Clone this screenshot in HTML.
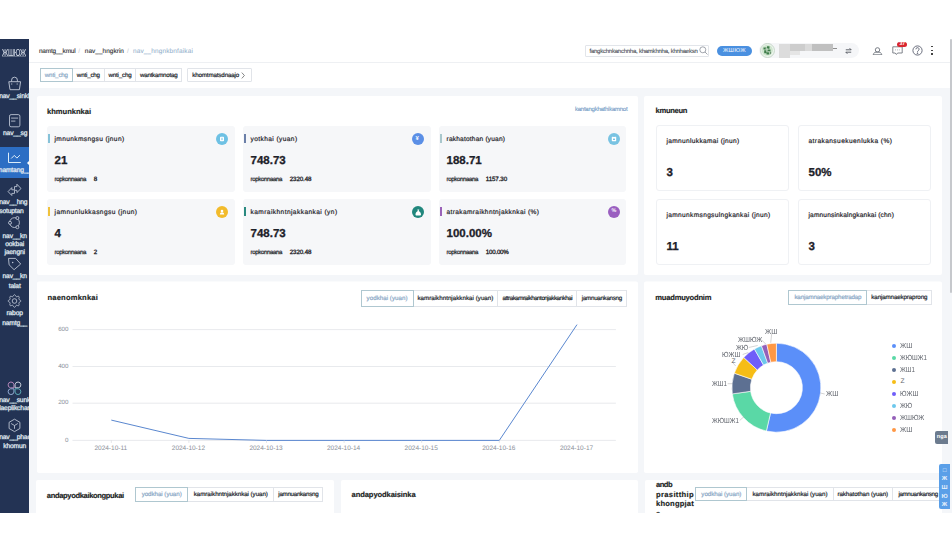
<!DOCTYPE html>
<html><head><meta charset="utf-8">
<style>
*{box-sizing:border-box;margin:0;padding:0}
html,body{width:952px;height:552px;overflow:hidden;background:#fff}
body{position:relative;font-family:"Liberation Sans",sans-serif;color:#303133;text-rendering:geometricPrecision}
.a{position:absolute}
.t{position:absolute;white-space:nowrap;line-height:1}
#app{position:absolute;left:0;top:39px;width:952px;height:473.5px;overflow:hidden;background:#fff}
#side{position:absolute;left:0;top:0;width:29.3px;height:473.5px;background:#233354;overflow:hidden}
.sl{position:absolute;left:0;width:29.3px;text-align:center;color:#dfe4ec;font-size:6.7px;line-height:1;white-space:nowrap;letter-spacing:-0.15px;-webkit-text-stroke:0.3px #dfe4ec}
.panel{position:absolute;background:#fff;border-radius:2px}
.ptitle{position:absolute;font-size:7.6px;font-weight:bold;color:#1a1d22;white-space:nowrap;line-height:1;-webkit-text-stroke:0.15px #1a1d22}
.sc{position:absolute;background:#f6f7f9;border-radius:3px}
.sc .bar{position:absolute;left:1.5px;top:8.2px;width:1.5px;height:9px}
.sc .tt{position:absolute;left:8px;top:11.2px;font-size:6.6px;color:#1f2329;white-space:nowrap;line-height:1;-webkit-text-stroke:0.2px #1f2329}
.sc .num{position:absolute;left:8px;top:30px;font-size:11.5px;font-weight:bold;color:#1d2129;line-height:1;white-space:nowrap;-webkit-text-stroke:0.3px #1d2129}
.sc .prev{position:absolute;left:8px;top:51.4px;font-size:6.1px;color:#2a2d33;white-space:nowrap;line-height:1;-webkit-text-stroke:0.25px #2a2d33}
.sc .prev b{position:absolute;left:40.5px;top:0;font-weight:bold}
.sc .ic{position:absolute;width:12px;height:12px;border-radius:6px;top:7px}
.oc{position:absolute;background:#fff;border:0.8px solid #eff1f4;border-radius:3px}
.oc .tt{position:absolute;left:9.5px;top:12.6px;font-size:6.6px;color:#1f2329;white-space:nowrap;line-height:1;-webkit-text-stroke:0.2px #1f2329}
.oc .num{position:absolute;left:9.5px;top:41.8px;font-size:11.5px;font-weight:bold;color:#1d2129;line-height:1;-webkit-text-stroke:0.3px #1d2129}
.tabs{position:absolute;display:flex;height:14.5px;border:0.7px solid #e1e4e9;background:#fff}
.tabs div{height:100%;border-left:0.7px solid #e1e4e9;font-size:6.2px;color:#22262c;-webkit-text-stroke:0.2px currentColor;display:flex;align-items:center;justify-content:center;white-space:nowrap}
.tabs div:first-child{border-left:none}
.tabs div.on{outline:0.8px solid #afc7d0;color:#8aa8c6 !important;position:relative;z-index:1}
</style></head>
<body>
<div id="app">
  <!-- sidebar -->
  <div id="side">
    <div class="t" style="left:2.2px;top:10px;font-size:10px;color:#d6dce6;-webkit-text-stroke:0.1px #d6dce6;transform:scaleX(0.66);transform-origin:0 0;letter-spacing:-0.3px">ЖШЮЖ</div><div class="a" style="left:2.2px;top:16.9px;width:23.5px;height:0.5px;background:#5d6a82"></div>
    <!-- bag -->
    <svg class="a" style="left:4px;top:35px" width="20" height="18" viewBox="0 0 20 18" fill="none" stroke="#c3cbd9" stroke-width="0.9" stroke-linejoin="round">
      <path d="M4.8 7.7h11.8l-1.2 8h-9.4z"/><path d="M7.6 7.6v-1.5a2.9 2.9 0 0 1 5.8 0v1.5"/><path d="M7.7 9.4v1.2M13.2 9.4v1.2" stroke-width="1.1"/>
    </svg>
    <div class="sl" style="top:55.1px;text-align:left;left:-0.8px">nav__sinkh</div>
    <!-- doc -->
    <svg class="a" style="left:4px;top:71px" width="20" height="20" viewBox="0 0 20 20" fill="none" stroke="#c3cbd9" stroke-width="0.85">
      <rect x="5.5" y="4.6" width="10.4" height="12.2" rx="1.6"/><path d="M7.1 8.1h7M7.1 11.1h4.3"/>
    </svg>
    <div class="sl" style="top:91.6px;left:0.5px">nav__sg</div>
    <!-- active -->
    <div class="a" style="left:0;top:107.5px;width:29.3px;height:31.5px;background:#2c6ec4"></div>
    <svg class="a" style="left:4px;top:109px" width="20" height="20" viewBox="0 0 20 20" fill="none" stroke="#e4f2fc" stroke-width="0.95" stroke-linejoin="round">
      <path d="M4.5 4.7v9.8h12.3"/><path d="M7.2 10.5l3.1-3.1 2.6 2.7 3-3"/>
    </svg>
    <div class="sl" style="top:129.4px;color:#eef4fb;text-align:left;left:-1.2px">namtang__kh</div>
    <div class="a" style="left:26.5px;top:121.6px;width:0;height:0;border-top:2.8px solid transparent;border-bottom:2.8px solid transparent;border-right:2.8px solid #fff"></div>
    <!-- arrows -->
    <svg class="a" style="left:4px;top:141px" width="20" height="18" viewBox="0 0 20 18" fill="none" stroke="#c3cbd9" stroke-width="0.85" stroke-linejoin="round">
      <path d="M4.1 11.6L7.8 7.6V9.8H10.5V6.6H12.9V4.2L17 8.5L12.9 12.6V10.3H10.5V13.4H7.8V15.5Z"/>
    </svg>
    <div class="sl" style="top:161.2px;text-align:left;left:-0.8px">nav__hng</div>
    <div class="sl" style="top:169.8px;text-align:left;left:-0.8px">sotuptan</div>
    <!-- nodes -->
    <svg class="a" style="left:4px;top:174px" width="20" height="20" viewBox="0 0 20 20" fill="none" stroke="#c3cbd9" stroke-width="0.85">
      <circle cx="10.5" cy="9.6" r="4.9"/><circle cx="6" cy="9.8" r="1.5" fill="#233354"/><circle cx="13.4" cy="5" r="1.5" fill="#233354"/><circle cx="13.4" cy="14.2" r="1.5" fill="#233354"/>
    </svg>
    <div class="sl" style="top:194.5px">nav__kn</div>
    <div class="sl" style="top:202.8px">ookbai</div>
    <div class="sl" style="top:211.2px">jaengni</div>
    <!-- tag -->
    <svg class="a" style="left:4px;top:216px" width="20" height="20" viewBox="0 0 20 20" fill="none" stroke="#c3cbd9" stroke-width="0.85" stroke-linejoin="round">
      <path d="M4.5 3.4H11.6L16.7 9L10.1 14.7L5.1 9.8Z"/><circle cx="8.7" cy="7.4" r="0.75" fill="#c3cbd9" stroke="none"/>
    </svg>
    <div class="sl" style="top:235.3px">nav__kn</div>
    <div class="sl" style="top:244.7px">talat</div>
    <!-- gear -->
    <svg class="a" style="left:4px;top:252.2px" width="20" height="20" viewBox="0 0 20 20" fill="none" stroke="#c3cbd9" stroke-width="0.85">
      <path d="M10.50 3.70 L10.91 3.82 L11.27 4.15 L11.57 4.61 L11.82 5.07 L12.05 5.45 L12.30 5.66 L12.63 5.69 L13.05 5.58 L13.56 5.43 L14.09 5.32 L14.58 5.34 L14.95 5.55 L15.16 5.92 L15.18 6.41 L15.07 6.94 L14.92 7.45 L14.81 7.87 L14.84 8.20 L15.05 8.45 L15.43 8.68 L15.89 8.93 L16.35 9.23 L16.68 9.59 L16.80 10.00 L16.68 10.41 L16.35 10.77 L15.89 11.07 L15.43 11.32 L15.05 11.55 L14.84 11.80 L14.81 12.13 L14.92 12.55 L15.07 13.06 L15.18 13.59 L15.16 14.08 L14.95 14.45 L14.58 14.66 L14.09 14.68 L13.56 14.57 L13.05 14.42 L12.63 14.31 L12.30 14.34 L12.05 14.55 L11.82 14.93 L11.57 15.39 L11.27 15.85 L10.91 16.18 L10.50 16.30 L10.09 16.18 L9.73 15.85 L9.43 15.39 L9.18 14.93 L8.95 14.55 L8.70 14.34 L8.37 14.31 L7.95 14.42 L7.44 14.57 L6.91 14.68 L6.42 14.66 L6.05 14.45 L5.84 14.08 L5.82 13.59 L5.93 13.06 L6.08 12.55 L6.19 12.13 L6.16 11.80 L5.95 11.55 L5.57 11.32 L5.11 11.07 L4.65 10.77 L4.32 10.41 L4.20 10.00 L4.32 9.59 L4.65 9.23 L5.11 8.93 L5.57 8.68 L5.95 8.45 L6.16 8.20 L6.19 7.87 L6.08 7.45 L5.93 6.94 L5.82 6.41 L5.84 5.92 L6.05 5.55 L6.42 5.34 L6.91 5.32 L7.44 5.43 L7.95 5.58 L8.37 5.69 L8.70 5.66 L8.95 5.45 L9.18 5.07 L9.43 4.61 L9.73 4.15 L10.09 3.82 L10.50 3.70Z"/><circle cx="10.5" cy="10" r="2.3"/>
    </svg>
    <div class="sl" style="top:272.2px">rabop</div>
    <div class="sl" style="top:281.6px">namtg__</div>
    <!-- colorful -->
    <svg class="a" style="left:4px;top:339px" width="20" height="20" viewBox="0 0 20 20" fill="none" stroke-width="0.9">
      <path d="M10.2 9.6H6.9A2.9 2.9 0 1 1 10.2 6.3Z" stroke="#c48fc4" transform="translate(-0.3 0.2)"/><path d="M10.8 9.6H14.1A2.9 2.9 0 1 0 10.8 6.3Z" stroke="#d9dee8" transform="translate(0.3 0.2)"/><path d="M10.2 10.6H6.9A2.9 2.9 0 1 0 10.2 13.9Z" stroke="#9bb3dc" transform="translate(-0.3 0.2)"/><path d="M10.8 10.6H14.1A2.9 2.9 0 1 1 10.8 13.9Z" stroke="#5fb3bd" transform="translate(0.3 0.2)"/>
    </svg>
    <div class="sl" style="top:358.8px;text-align:left;left:-0.8px">nav__sunk</div>
    <div class="sl" style="top:367px;text-align:left;left:-0.8px">laeplikchan</div>
    <!-- cube -->
    <svg class="a" style="left:4px;top:376px" width="20" height="20" viewBox="0 0 20 20" fill="none" stroke="#c3cbd9" stroke-width="0.85" stroke-linejoin="round">
      <path d="M10.5 4.2L15.9 7.3V13.5L10.5 16.6L5.1 13.5V7.3Z"/><path d="M7.1 8.5L10.5 10.5L13.8 8.5M10.5 10.5V13.8"/>
    </svg>
    <div class="sl" style="top:396.3px;text-align:left;left:-0.8px">nav__phaen</div>
    <div class="sl" style="top:405.3px">khomun</div>
  </div>
  <!-- header -->
  <div class="a" style="left:29.3px;top:23px;width:921px;height:0.8px;background:#eef0f3"></div>
  <div class="t" style="left:39px;top:10px;font-size:6.4px;color:#303133;-webkit-text-stroke:0.12px currentColor;--w:36.4px;letter-spacing:-0.180px;/*a*/">namtg__kmul</div>
  <div class="t" style="left:78.3px;top:10px;font-size:6.4px;color:#c0c4cc">/</div>
  <div class="t" style="left:84.8px;top:10px;font-size:6.4px;color:#303133;-webkit-text-stroke:0.12px currentColor;--w:39.2px;letter-spacing:0.069px;/*a*/">nav__hngkrin</div>
  <div class="t" style="left:127px;top:10px;font-size:6.4px;color:#c0c4cc">/</div>
  <div class="t" style="left:133px;top:10px;font-size:6.4px;color:#92afcc;-webkit-text-stroke:0.05px currentColor;--w:60px;letter-spacing:0.174px;/*a*/">nav__hngnkbnfaikai</div>
  <!-- search -->
  <div class="a" style="left:584.6px;top:6px;width:124.6px;height:11.5px;border:0.7px solid #e2e5ea;border-radius:1px;background:#fff"></div>
  <div class="t" style="left:589.5px;top:9.8px;font-size:6px;color:#4a4e55;-webkit-text-stroke:0.1px #4a4e55;--w:108px;letter-spacing:-0.239px;/*a*/">fangkchnkanchnha, khamkhnha, khnhaeksn</div>
  <svg class="a" style="left:698.5px;top:7px" width="9" height="9" viewBox="0 0 9 9" fill="none" stroke="#8a8f99" stroke-width="0.8"><circle cx="3.8" cy="3.8" r="3"/><path d="M6 6l2.5 2.5"/></svg>
  <!-- guide button -->
  <div class="a" style="left:717px;top:6.8px;width:35px;height:10.1px;border-radius:5px;background:#4a90e0"></div>
  <div class="t" style="left:722.9px;top:10.2px;font-size:5.8px;color:#f2f7fd;--w:23px;letter-spacing:0.312px;/*a*/">ЖШЮЖ</div>
  <!-- user pill -->
  <div class="a" style="left:759px;top:4.3px;width:100px;height:14.7px;border-radius:7.4px;background:#f5f6f8"></div>
  <div class="a" style="left:759.5px;top:3.7px;width:15px;height:15px;border-radius:50%;background:#eef6ee;border:0.7px solid #c9d8cb"></div>
  <svg class="a" style="left:761px;top:5px" width="12.5" height="12.5" viewBox="0 0 12.5 12.5"><circle cx="6.25" cy="6.25" r="5.6" fill="#cfe5cf"/><path d="M2.5 3.5h3v2h-3zM6 2.2h2.5v2.5H6zM3.2 6.2h2.2v3H3.2zM6.5 5.5h3v2.2h-3zM5.5 8.2h2.8v2.2H5.5z" fill="#3f7d4a"/><path d="M8.8 8l1.4 0.8-0.6 1.5z" fill="#2d5f37"/><path d="M4.4 4.8h2.4M7.2 7.6h1.6" stroke="#e8f3e8" stroke-width="0.6"/></svg>
  <div class="a" style="left:779.4px;top:5px;width:58px;height:14px;filter:blur(0.7px)"><div class="a" style="left:0;top:0;width:11px;height:14px;background:#dcdcdc"></div><div class="a" style="left:11px;top:0;width:15px;height:7px;background:#cdcdcd"></div><div class="a" style="left:26px;top:0;width:7px;height:7px;background:#dadada"></div><div class="a" style="left:33px;top:0;width:21px;height:7px;background:#c0c0c0"></div><div class="a" style="left:11px;top:7px;width:10px;height:4px;background:#e5e5e5"></div><div class="a" style="left:53.5px;top:3.6px;width:4.5px;height:0.9px;background:#8f8f8f"></div></div>
  <svg class="a" style="left:844.5px;top:7.5px" width="7" height="8" viewBox="0 0 7 8" fill="none" stroke="#3a3f48" stroke-width="0.8"><path d="M0.8 2.8h5.4L4.6 1.2M6.2 5.2H0.8l1.6 1.6"/></svg>
  <!-- icons -->
  <svg class="a" style="left:871.5px;top:7.5px" width="11" height="8.5" viewBox="0 0 11 8.5" fill="none" stroke="#6a6f78" stroke-width="0.9"><circle cx="5.5" cy="2.9" r="2.2"/><path d="M1.2 7.8c0.3-2 1.9-2.8 4.3-2.8s4 0.8 4.3 2.8z"/></svg>
  <svg class="a" style="left:891.5px;top:7.3px" width="11" height="9.5" viewBox="0 0 11 9.5" fill="none" stroke="#6a6f78" stroke-width="0.85"><path d="M0.8 0.8h9.4v6.2h-4.6l-1.2 1.5-1.2-1.5h-2.4z"/><path d="M3.3 3.9h0.7M5.1 3.9h0.7M6.9 3.9h0.7" stroke-width="0.7"/></svg>
  <div class="a" style="left:897.2px;top:3.3px;width:10px;height:5.2px;border-radius:2.6px;background:#d9262f"></div>
  <div class="t" style="left:899.5px;top:3.3px;font-size:5px;color:#fff;font-weight:bold">37</div>
  <svg class="a" style="left:911.5px;top:6.3px" width="11" height="11" viewBox="0 0 11 11" fill="none" stroke="#5b6070" stroke-width="0.9"><circle cx="5.5" cy="5.5" r="4.6"/><path d="M3.9 4.3a1.6 1.6 0 1 1 2.3 1.4c-0.5 0.3-0.7 0.6-0.7 1.2"/><circle cx="5.5" cy="8.2" r="0.4" fill="#5b6070"/></svg>
  <div class="a" style="left:931px;top:6.8px;width:1.6px;height:1.6px;background:#444"></div>
  <div class="a" style="left:931px;top:10.6px;width:1.6px;height:1.6px;background:#444"></div>
  <div class="a" style="left:931px;top:14.4px;width:1.6px;height:1.6px;background:#444"></div>
  <!-- date tabs -->
  <div class="tabs" style="left:39.5px;top:29.2px;width:142.5px;height:14.3px">
    <div class="on" style="width:31.8px;color:#8aaed0"><span style="--w:23px;letter-spacing:-0.178px;/*a*/">wnti_chg</span></div><div style="width:31.5px"><span style="--w:23px;letter-spacing:-0.178px;/*a*/">wnti_chg</span></div><div style="width:32px"><span style="--w:23px;letter-spacing:-0.178px;/*a*/">wnti_chg</span></div><div style="width:45.8px"><span style="--w:37.4px;letter-spacing:-0.238px;/*a*/">wantkamnotag</span></div>
  </div>
  <div class="tabs" style="left:186.5px;top:29.2px;width:65.5px;height:14.3px;border-radius:1px">
    <div style="width:100%;justify-content:flex-start;padding-left:4.7px"><span style="--w:47px;letter-spacing:-0.123px;/*a*/">khomtmatsdnaajo</span></div>
  </div>
  <svg class="a" style="left:240.5px;top:32.7px" width="4" height="7" viewBox="0 0 4 7" fill="none" stroke="#555" stroke-width="0.7"><path d="M0.8 0.6l2.6 2.9-2.6 2.9"/></svg>
  <!-- gray content bg -->
  <div class="a" style="left:29.3px;top:49px;width:921px;height:425px;background:#f4f6f9"></div>
  <!-- right scroll strip -->
  <div class="a" style="left:949.8px;top:49px;width:2.2px;height:425px;background:#f4f6f9"></div><div class="a" style="left:950.2px;top:0.4px;width:1.8px;height:253.6px;border-radius:1px;background:#c6c8cc"></div>

  <!-- panels -->
  <div class="panel" style="left:36.5px;top:57px;width:601.5px;height:178.7px">
    <div class="ptitle" style="left:10.5px;top:11.6px;--w:44px;letter-spacing:-0.031px;/*a*/">khmunknkai</div>
    <div class="t" style="left:538.5px;top:10.6px;font-size:6px;color:#6f98c4;-webkit-text-stroke:0.1px #6f98c4;--w:52.4px;letter-spacing:-0.245px;/*a*/">kantangkhathikamnot</div>
  </div>
  <div class="panel" style="left:644.3px;top:56.5px;width:297.7px;height:179.2px">
    <div class="ptitle" style="left:11.3px;top:11.6px;--w:31.4px;letter-spacing:-0.338px;/*a*/">kmuneun</div>
  </div>
  <div class="sc" style="left:46.5px;top:86.8px;width:188px;height:65.8px">
    <div class="bar" style="background:#86c2d8"></div>
    <div class="tt" style="--w:70px;letter-spacing:0.366px;/*a*/">jmnunkmsngsu (jnun)</div>
    <div class="num" style="">21</div>
    <div class="prev" style="--w:31.6px;letter-spacing:-0.362px;/*a*/">ropkonnaana</div>
    <div class="t" style="left:47.3px;top:51.4px;font-size:6.2px;color:#1f2329;-webkit-text-stroke:0.3px #1f2329;--w:3px;letter-spacing:-0.453px;/*a*/">8</div>
    <div class="ic" style="left:169.5px;background:#6ec1e4"><svg class="a" style="left:3px;top:3px" width="6" height="6" viewBox="0 0 6 6"><rect x="1" y="0.8" width="4" height="4.4" rx="0.8" fill="#fff"/><path d="M2 2.3h2M2 3.6h2" stroke="#6ec1e4" stroke-width="0.6"/></svg></div>
  </div>
  <div class="sc" style="left:242.5px;top:86.8px;width:188px;height:65.8px">
    <div class="bar" style="background:#6b7fa8"></div>
    <div class="tt" style="--w:47px;letter-spacing:0.398px;/*a*/">yotkhai (yuan)</div>
    <div class="num" style="">748.73</div>
    <div class="prev" style="--w:31.6px;letter-spacing:-0.362px;/*a*/">ropkonnaana</div>
    <div class="t" style="left:47.3px;top:51.4px;font-size:6.2px;color:#1f2329;-webkit-text-stroke:0.3px #1f2329;--w:21.5px;letter-spacing:-0.125px;/*a*/">2320.48</div>
    <div class="ic" style="left:169.5px;background:#5b8fe6"><div class="t" style="left:3.6px;top:3.2px;font-size:6px;color:#fff;font-weight:bold">&#165;</div></div>
  </div>
  <div class="sc" style="left:438.5px;top:86.8px;width:187.5px;height:65.8px">
    <div class="bar" style="background:#a9c7cc"></div>
    <div class="tt" style="--w:58.7px;letter-spacing:0.186px;/*a*/">rakhatothan (yuan)</div>
    <div class="num" style="">188.71</div>
    <div class="prev" style="--w:31.6px;letter-spacing:-0.362px;/*a*/">ropkonnaana</div>
    <div class="t" style="left:47.3px;top:51.4px;font-size:6.2px;color:#1f2329;-webkit-text-stroke:0.3px #1f2329;--w:21.2px;letter-spacing:-0.101px;/*a*/">1157.30</div>
    <div class="ic" style="left:169.5px;background:#79c3e2"><svg class="a" style="left:3px;top:3px" width="6" height="6" viewBox="0 0 6 6"><rect x="0.8" y="1" width="4.4" height="4.2" rx="0.6" fill="#fff"/><path d="M1.8 0.5v1.2M4.2 0.5v1.2" stroke="#fff" stroke-width="0.6"/><rect x="2" y="2.6" width="2" height="1.4" fill="#79c3e2"/></svg></div>
  </div>
  <div class="sc" style="left:46.5px;top:160px;width:188px;height:65.8px">
    <div class="bar" style="background:#f0c23c"></div>
    <div class="tt" style="--w:83px;letter-spacing:0.421px;/*a*/">jamnunlukkasngsu (jnun)</div>
    <div class="num" style="">4</div>
    <div class="prev" style="--w:31.6px;letter-spacing:-0.362px;/*a*/">ropkonnaana</div>
    <div class="t" style="left:47.3px;top:51.4px;font-size:6.2px;color:#1f2329;-webkit-text-stroke:0.3px #1f2329;--w:3px;letter-spacing:-0.453px;/*a*/">2</div>
    <div class="ic" style="left:169.5px;background:#f2bb2c"><svg class="a" style="left:3px;top:2.8px" width="6" height="6.5" viewBox="0 0 6 6.5"><circle cx="3" cy="2" r="1.3" fill="#fff"/><path d="M0.8 5.6c0.2-1.6 1.1-2.3 2.2-2.3s2 0.7 2.2 2.3z" fill="#fff"/></svg></div>
  </div>
  <div class="sc" style="left:242.5px;top:160px;width:188px;height:65.8px">
    <div class="bar" style="background:#2a8a80"></div>
    <div class="tt" style="--w:87px;letter-spacing:0.416px;/*a*/">kamraikhntnjakkankai (yn)</div>
    <div class="num" style="">748.73</div>
    <div class="prev" style="--w:31.6px;letter-spacing:-0.362px;/*a*/">ropkonnaana</div>
    <div class="t" style="left:47.3px;top:51.4px;font-size:6.2px;color:#1f2329;-webkit-text-stroke:0.3px #1f2329;--w:21.5px;letter-spacing:-0.125px;/*a*/">2320.48</div>
    <div class="ic" style="left:169.5px;background:#21877d"><svg class="a" style="left:2.8px;top:2.6px" width="6.5" height="7" viewBox="0 0 6.5 7"><path d="M2.3 0.6h2l-0.6 1.4c1.6 0.6 2.3 2.3 2.3 3.4 0 0.8-0.4 1.1-1.2 1.1h-3.1c-0.8 0-1.2-0.3-1.2-1.1 0-1.1 0.7-2.8 2.3-3.4z" fill="#fff"/></svg></div>
  </div>
  <div class="sc" style="left:438.5px;top:160px;width:187.5px;height:65.8px">
    <div class="bar" style="background:#9a62b8"></div>
    <div class="tt" style="--w:92.8px;letter-spacing:0.356px;/*a*/">atrakamraikhntnjakknkai (%)</div>
    <div class="num" style="">100.00%</div>
    <div class="prev" style="--w:31.6px;letter-spacing:-0.362px;/*a*/">ropkonnaana</div>
    <div class="t" style="left:47.3px;top:51.4px;font-size:6.2px;color:#1f2329;-webkit-text-stroke:0.3px #1f2329;--w:22.8px;letter-spacing:-0.234px;/*a*/">100.00%</div>
    <div class="ic" style="left:169.5px;background:#9a5fc0"><div class="t" style="left:3.4px;top:3.3px;font-size:5.4px;color:#fff;font-weight:bold">%</div></div>
  </div>
  <div class="oc" style="left:656px;top:86.3px;width:133px;height:65.3px">
    <div class="tt" style="--w:73px;letter-spacing:0.317px;/*a*/">jamnunlukkamai (jnun)</div>
    <div class="num">3</div>
  </div>
  <div class="oc" style="left:798px;top:86.3px;width:133px;height:65.3px">
    <div class="tt" style="--w:83.8px;letter-spacing:0.408px;/*a*/">atrakansuekuenlukka (%)</div>
    <div class="num">50%</div>
  </div>
  <div class="oc" style="left:656px;top:160.3px;width:133px;height:65.3px">
    <div class="tt" style="--w:104px;letter-spacing:0.325px;/*a*/">jamnunkmsngsulngkankai (jnun)</div>
    <div class="num">11</div>
  </div>
  <div class="oc" style="left:798px;top:160.3px;width:133px;height:65.3px">
    <div class="tt" style="--w:85.5px;letter-spacing:0.145px;/*a*/">jamnunsinkalngkankai (chn)</div>
    <div class="num">3</div>
  </div>

  <div class="panel" style="left:36.5px;top:243px;width:601.5px;height:190.5px;box-shadow:0 -0.6px 0 #fff">
    <svg class="a" style="left:0;top:0" width="601.5" height="190.5" viewBox="0 0 601.5 190.5"><path d="M35.5 47.6H578.9" stroke="#e2e5e9" stroke-width="0.8"/><path d="M35.5 84.5H578.9" stroke="#e2e5e9" stroke-width="0.8"/><path d="M35.5 121.2H578.9" stroke="#e2e5e9" stroke-width="0.8"/><path d="M35.5 158.4H578.9" stroke="#e2e5e9" stroke-width="0.8"/><path d="M74.3 138.1 L151.9 156.4 L229.5 158.4 L307.1 158.4 L384.7 158.4 L462.3 158.4 L540.0 42.6" fill="none" stroke="#5a87cf" stroke-width="1"/><path d="M74.3 158.4v2.5" stroke="#d0d3d8" stroke-width="0.6"/><path d="M151.9 158.4v2.5" stroke="#d0d3d8" stroke-width="0.6"/><path d="M229.5 158.4v2.5" stroke="#d0d3d8" stroke-width="0.6"/><path d="M307.1 158.4v2.5" stroke="#d0d3d8" stroke-width="0.6"/><path d="M384.7 158.4v2.5" stroke="#d0d3d8" stroke-width="0.6"/><path d="M462.3 158.4v2.5" stroke="#d0d3d8" stroke-width="0.6"/><path d="M540.0 158.4v2.5" stroke="#d0d3d8" stroke-width="0.6"/></svg>
    <div class="ptitle" style="left:11px;top:11.8px;--w:50.5px;letter-spacing:0.178px;/*a*/">naenomknkai</div>
    <div class="t" style="right:569.5px;top:44.7px;font-size:6.2px;color:#8a8f99">600</div>
    <div class="t" style="right:569.5px;top:81.6px;font-size:6.2px;color:#8a8f99">400</div>
    <div class="t" style="right:569.5px;top:118.3px;font-size:6.2px;color:#8a8f99">200</div>
    <div class="t" style="right:569.5px;top:155.5px;font-size:6.2px;color:#8a8f99">0</div>
    <div class="t" style="left:54.3px;top:163.7px;width:40px;text-align:center;font-size:6.5px;color:#8a8f99">2024-10-11</div>
    <div class="t" style="left:131.9px;top:163.7px;width:40px;text-align:center;font-size:6.5px;color:#8a8f99">2024-10-12</div>
    <div class="t" style="left:209.5px;top:163.7px;width:40px;text-align:center;font-size:6.5px;color:#8a8f99">2024-10-13</div>
    <div class="t" style="left:287.1px;top:163.7px;width:40px;text-align:center;font-size:6.5px;color:#8a8f99">2024-10-14</div>
    <div class="t" style="left:364.7px;top:163.7px;width:40px;text-align:center;font-size:6.5px;color:#8a8f99">2024-10-15</div>
    <div class="t" style="left:442.3px;top:163.7px;width:40px;text-align:center;font-size:6.5px;color:#8a8f99">2024-10-16</div>
    <div class="t" style="left:520.0px;top:163.7px;width:40px;text-align:center;font-size:6.5px;color:#8a8f99">2024-10-17</div>
    <div class="tabs" style="left:324.2px;top:8.2px;width:266.7px;height:16.8px">
      <div class="on" style="width:51.2px;color:#7ea6c8"><span style="--w:41px;letter-spacing:0.029px;/*a*/">yodkhai (yuan)</span></div><div style="width:85.4px"><span style="--w:76px;letter-spacing:0.026px;/*a*/">kamraikhntnjakknkai (yuan)</span></div><div style="width:79.7px"><span style="--w:69.6px;letter-spacing:-0.450px;/*a*/">attrakamraikhantonjakkankhai</span></div><div style="width:50.4px"><span style="--w:40px;letter-spacing:-0.284px;/*a*/">jamnuankansng</span></div>
    </div>
  </div>
  <div class="panel" style="left:644.3px;top:243px;width:297.7px;height:190.5px;box-shadow:0 -0.6px 0 #fff">
    <svg class="a" style="left:0;top:0" width="297.7" height="190.5" viewBox="0 0 297.7 190.5"><path d="M132.40 61.20A44.5 44.5 0 1 1 122.39 149.06L126.55 131.03A26.0 26.0 0 1 0 132.40 79.70Z" fill="#5b8ff9" stroke="#fff" stroke-width="0.6"/><path d="M122.39 149.06A44.5 44.5 0 0 1 88.33 111.89L106.65 109.32A26.0 26.0 0 0 0 126.55 131.03Z" fill="#5ad8a6" stroke="#fff" stroke-width="0.6"/><path d="M88.33 111.89A44.5 44.5 0 0 1 90.32 91.21L107.82 97.24A26.0 26.0 0 0 0 106.65 109.32Z" fill="#5d7092" stroke="#fff" stroke-width="0.6"/><path d="M90.32 91.21A44.5 44.5 0 0 1 99.75 75.46L113.32 88.03A26.0 26.0 0 0 0 107.82 97.24Z" fill="#f6bd16" stroke="#fff" stroke-width="0.6"/><path d="M99.75 75.46A44.5 44.5 0 0 1 110.42 67.01L119.56 83.09A26.0 26.0 0 0 0 113.32 88.03Z" fill="#6f5ef9" stroke="#fff" stroke-width="0.6"/><path d="M110.42 67.01A44.5 44.5 0 0 1 117.47 63.78L123.68 81.21A26.0 26.0 0 0 0 119.56 83.09Z" fill="#6dc8ec" stroke="#fff" stroke-width="0.6"/><path d="M117.47 63.78A44.5 44.5 0 0 1 122.84 62.24L126.82 80.31A26.0 26.0 0 0 0 123.68 81.21Z" fill="#945fb9" stroke="#fff" stroke-width="0.6"/><path d="M122.84 62.24A44.5 44.5 0 0 1 132.40 61.20L132.40 79.70A26.0 26.0 0 0 0 126.82 80.31Z" fill="#ff9845" stroke="#fff" stroke-width="0.6"/><path d="M176.2 111.0L180.7 112.0" stroke="#aaa" stroke-width="0.5" fill="none"/><path d="M100.7 134.0L95.7 138.5" stroke="#aaa" stroke-width="0.5" fill="none"/><path d="M88.0 101.7L83.7 101.7" stroke="#aaa" stroke-width="0.5" fill="none"/><path d="M91.7 84.0L88.2 80.0" stroke="#aaa" stroke-width="0.5" fill="none"/><path d="M104.2 70.5L98.7 72.5" stroke="#aaa" stroke-width="0.5" fill="none"/><path d="M113.7 63.5L104.7 65.5" stroke="#aaa" stroke-width="0.5" fill="none"/><path d="M121.7 62.0L117.7 58.0" stroke="#aaa" stroke-width="0.5" fill="none"/><path d="M126.7 60.8L127.7 52.0" stroke="#aaa" stroke-width="0.5" fill="none"/></svg>
    <div class="ptitle" style="left:11px;top:11.8px;--w:56px;letter-spacing:-0.221px;/*a*/">muadmuyodnim</div>
    <div class="tabs" style="left:144.1px;top:7.9px;width:143.9px;height:15.1px">
      <div class="on" style="width:78.1px;color:#7ea6c8"><span style="--w:67px;letter-spacing:-0.145px;/*a*/">kanjamnaekpraphetradap</span></div><div style="width:65.8px"><span style="--w:56px;letter-spacing:-0.119px;/*a*/">kanjamnaekpraprong</span></div>
    </div>
    <div class="t" style="left:181.7px;top:108.4px;font-size:7.4px;color:#62666e;transform:scaleX(0.904);transform-origin:0 0;">ЖШ</div>
    <div class="t" style="left:67.7px;top:135.4px;font-size:7.4px;color:#62666e;transform:scaleX(0.844);transform-origin:0 0;">ЖЮШЖ1</div>
    <div class="t" style="left:67.7px;top:98.1px;font-size:7.4px;color:#62666e;transform:scaleX(0.847);transform-origin:0 0;">ЖШ1</div>
    <div class="t" style="left:87.2px;top:76.6px;font-size:6.6px;color:#62666e;">Z</div>
    <div class="t" style="left:77.4px;top:68.5px;font-size:7.4px;color:#62666e;transform:scaleX(0.876);transform-origin:0 0;">ЮЖШ</div>
    <div class="t" style="left:91.6px;top:61.6px;font-size:7.4px;color:#62666e;transform:scaleX(0.860);transform-origin:0 0;">ЖЮ</div>
    <div class="t" style="left:93.7px;top:53.5px;font-size:7.4px;color:#62666e;transform:scaleX(0.877);transform-origin:0 0;">ЖШЮЖ</div>
    <div class="t" style="left:120.5px;top:46.4px;font-size:7.4px;color:#62666e;transform:scaleX(0.904);transform-origin:0 0;">ЖШ</div>
    <div class="a" style="left:247.7px;top:61.5px;width:4px;height:4px;border-radius:2px;background:#5b8ff9"></div>
    <div class="t" style="left:256.2px;top:59.9px;font-size:7.4px;color:#62666e;transform:scaleX(0.904);transform-origin:0 0;">ЖШ</div>
    <div class="a" style="left:247.7px;top:73.5px;width:4px;height:4px;border-radius:2px;background:#5ad8a6"></div>
    <div class="t" style="left:256.2px;top:71.9px;font-size:7.4px;color:#62666e;transform:scaleX(0.844);transform-origin:0 0;">ЖЮШЖ1</div>
    <div class="a" style="left:247.7px;top:85.5px;width:4px;height:4px;border-radius:2px;background:#5d7092"></div>
    <div class="t" style="left:256.2px;top:83.9px;font-size:7.4px;color:#62666e;transform:scaleX(0.847);transform-origin:0 0;">ЖШ1</div>
    <div class="a" style="left:247.7px;top:97.5px;width:4px;height:4px;border-radius:2px;background:#f6bd16"></div>
    <div class="t" style="left:256.2px;top:96.8px;font-size:6.6px;color:#62666e;">Z</div>
    <div class="a" style="left:247.7px;top:109.5px;width:4px;height:4px;border-radius:2px;background:#6f5ef9"></div>
    <div class="t" style="left:256.2px;top:107.9px;font-size:7.4px;color:#62666e;transform:scaleX(0.876);transform-origin:0 0;">ЮЖШ</div>
    <div class="a" style="left:247.7px;top:121.5px;width:4px;height:4px;border-radius:2px;background:#6dc8ec"></div>
    <div class="t" style="left:256.2px;top:119.9px;font-size:7.4px;color:#62666e;transform:scaleX(0.860);transform-origin:0 0;">ЖЮ</div>
    <div class="a" style="left:247.7px;top:133.5px;width:4px;height:4px;border-radius:2px;background:#945fb9"></div>
    <div class="t" style="left:256.2px;top:131.9px;font-size:7.4px;color:#62666e;transform:scaleX(0.877);transform-origin:0 0;">ЖШЮЖ</div>
    <div class="a" style="left:247.7px;top:145.5px;width:4px;height:4px;border-radius:2px;background:#ff9845"></div>
    <div class="t" style="left:256.2px;top:143.9px;font-size:7.4px;color:#62666e;transform:scaleX(0.904);transform-origin:0 0;">ЖШ</div>
  </div>
  <div class="panel" style="left:36px;top:441.2px;width:297.6px;height:40px">
    <div class="ptitle" style="left:10.8px;top:11.9px;--w:77px;letter-spacing:-0.370px;/*a*/">andapyodkaikongpukai</div>
    <div class="tabs" style="left:98.9px;top:7px;width:188.5px;height:14.5px">
      <div class="on" style="width:52.1px;color:#7ea6c8"><span style="--w:40px;letter-spacing:-0.042px;/*a*/">yodkhai (yuan)</span></div><div style="width:86.7px"><span style="--w:74px;letter-spacing:-0.051px;/*a*/">kamraikhntnjakknkai (yuan)</span></div><div style="width:49.7px"><span style="--w:40px;letter-spacing:-0.284px;/*a*/">jamnuankansng</span></div>
    </div>
  </div>
  <div class="panel" style="left:340.6px;top:441.2px;width:297.4px;height:40px">
    <div class="ptitle" style="left:11px;top:11.2px;--w:64px;letter-spacing:-0.115px;/*a*/">andapyodkaisinka</div>
  </div>
  <div class="panel" style="left:645px;top:441.2px;width:297px;height:40px">
    <div class="ptitle" style="left:11px;top:1.2px;--w:16px;letter-spacing:-0.535px;/*a*/">andb</div>
    <div class="ptitle" style="left:11px;top:10.8px;--w:38px;letter-spacing:0.339px;/*a*/">prasitthip</div>
    <div class="ptitle" style="left:11px;top:20.3px;--w:38px;letter-spacing:0.191px;/*a*/">khongpjat</div>
    <div class="ptitle" style="left:11px;top:29.8px;">a</div>
    <div class="tabs" style="left:50.2px;top:7.3px;width:250px;height:13.8px">
      <div class="on" style="width:50.7px;color:#7ea6c8"><span style="--w:40px;letter-spacing:-0.042px;/*a*/">yodkhai (yuan)</span></div><div style="width:86.8px"><span style="--w:75px;letter-spacing:-0.013px;/*a*/">kamraikhntnjakknkai (yuan)</span></div><div style="width:59.8px"><span style="--w:50.6px;letter-spacing:-0.075px;/*a*/">rakhatothan (yuan)</span></div><div style="width:52.7px;justify-content:flex-start;padding-left:5.5px"><span style="--w:39.4px;letter-spacing:-0.330px;/*a*/">jamnuankansng</span></div>
    </div>
  </div>
  <!-- floating tabs -->
  <div class="a" style="left:935.2px;top:392.2px;width:13px;height:12.7px;border-radius:2px 0 0 2px;background:#6c7b8e"></div>
  <div class="t" style="left:936.8px;top:395.5px;font-size:5.5px;color:#fff;font-weight:bold;--w:10px;letter-spacing:0.073px;/*a*/">nga</div>
  <div class="a" style="left:939px;top:425.4px;width:10.7px;height:44.6px;border-radius:2px 0 0 2px;background:#5a9fe8"></div>
  <div class="a" style="left:940.5px;top:427.5px;width:8px;font-size:6px;line-height:8.7px;color:#e8f1fb;text-align:center;font-weight:bold">&#9633;<br>Ж<br>Ш<br>Ю<br>Ж</div>
</div>
</body></html>
